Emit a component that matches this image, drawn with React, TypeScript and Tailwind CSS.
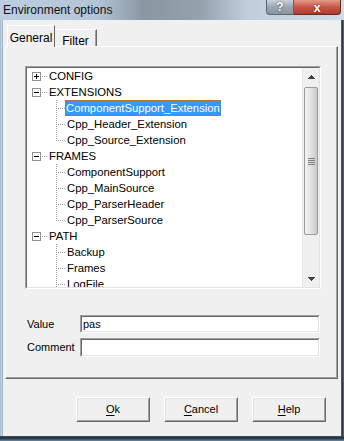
import React from "react";

type Node = {
  label: string;
  level: 0 | 1;
  expanded?: boolean;
  last?: boolean;
  selected?: boolean;
};

const nodes: Node[] = [
  { label: "CONFIG", level: 0, expanded: false },
  { label: "EXTENSIONS", level: 0, expanded: true },
  { label: "ComponentSupport_Extension", level: 1, selected: true },
  { label: "Cpp_Header_Extension", level: 1 },
  { label: "Cpp_Source_Extension", level: 1, last: true },
  { label: "FRAMES", level: 0, expanded: true },
  { label: "ComponentSupport", level: 1 },
  { label: "Cpp_MainSource", level: 1 },
  { label: "Cpp_ParserHeader", level: 1 },
  { label: "Cpp_ParserSource", level: 1, last: true },
  { label: "PATH", level: 0, expanded: true },
  { label: "Backup", level: 1 },
  { label: "Frames", level: 1 },
  { label: "LogFile", level: 1 },
];

const DOT = "#a0a0a0";

const TreeRow = ({ node }: { node: Node }) => {
  if (node.level === 0) {
    return (
      <div className="flex h-[16px] items-center shrink-0">
        <svg width="21" height="16" className="shrink-0" shapeRendering="crispEdges">
          <rect x="5.5" y="4.5" width="8" height="8" fill="#fff" stroke="#919191" />
          <line x1="7" y1="8.5" x2="12" y2="8.5" stroke="#000" />
          {!node.expanded && <line x1="9.5" y1="6" x2="9.5" y2="11" stroke="#000" />}
          <line x1="15" y1="8.5" x2="20" y2="8.5" stroke={DOT} strokeDasharray="1 1" />
        </svg>
        <span className="px-[1px] leading-[14px]">{node.label}</span>
      </div>
    );
  }
  return (
    <div className="flex h-[16px] items-center shrink-0">
      <svg width="38" height="16" className="shrink-0" shapeRendering="crispEdges">
        <line
          x1="29.5"
          y1="0"
          x2="29.5"
          y2={node.last ? 9 : 16}
          stroke={DOT}
          strokeDasharray="1 1"
        />
        <line x1="31" y1="8.5" x2="38" y2="8.5" stroke={DOT} strokeDasharray="1 1" />
      </svg>
      <span
        className={
          node.selected
            ? "bg-[#3399ff] text-white px-[1px] leading-[14px] outline outline-1 outline-dotted outline-[#b0702a] -outline-offset-1 h-[16px] flex items-center"
            : "px-[1px] ml-[1px] leading-[14px]"
        }
      >
        {node.label}
      </span>
    </div>
  );
};

const Arrow = ({ up }: { up?: boolean }) => (
  <div className="h-[17px] w-full flex items-center justify-center">
    <svg width="7" height="4" shapeRendering="crispEdges">
      {up ? (
        <polygon points="3.5,0 7,4 0,4" fill="#404040" />
      ) : (
        <polygon points="0,0 7,0 3.5,4" fill="#404040" />
      )}
    </svg>
  </div>
);

const Sunken = ({ className, children }: { className?: string; children?: React.ReactNode }) => (
  <div className={`border border-t-[#a0a0a0] border-l-[#a0a0a0] border-r-white border-b-white ${className ?? ""}`}>
    <div className="border border-t-[#696969] border-l-[#696969] border-r-[#e3e3e3] border-b-[#e3e3e3] h-full bg-white">
      {children}
    </div>
  </div>
);

const Button = ({ letter, rest }: { letter: string; rest: string }) => (
  <div className="w-[74px] h-[25px] border border-t-white border-l-white border-r-[#696969] border-b-[#696969] shrink-0">
    <div className="h-full border border-t-[#e3e3e3] border-l-[#e3e3e3] border-r-[#a0a0a0] border-b-[#a0a0a0] flex items-center justify-center bg-[#f0f0f0]">
      <span>
        <span className="underline underline-offset-[2px]">{letter}</span>
        {rest}
      </span>
    </div>
  </div>
);

export default function App() {
  return (
    <div
      className="w-[344px] h-[441px] flex flex-col text-[11px] text-black overflow-hidden"
      style={{ fontFamily: '"Liberation Sans", Arial, sans-serif' }}
    >
      {/* title bar */}
      <div className="h-[20px] shrink-0 flex justify-between bg-[linear-gradient(90deg,#bccfe0_0%,#b3c5d6_28%,#8a96a2_42%,#95a1ad_58%,#c0cedb_72%,#d0dbe5_100%)]">
        <div className="pl-[3px] pt-[2px] text-[12px] leading-[16px] text-[#111]">Environment options</div>
        <div className="flex h-[15px] mr-[3px]">
          <div className="w-[28px] h-full rounded-bl-[4px] border border-[#5a6470] border-t-0 bg-[linear-gradient(180deg,#c9d3dc,#9aa6b2_50%,#8995a1)] flex items-center justify-center text-white font-bold text-[12px] leading-none [text-shadow:0_0_2px_#333]">
            ?
          </div>
          <div className="w-[47px] h-full rounded-br-[4px] border border-[#5a2a22] border-t-0 border-l-0 bg-[linear-gradient(180deg,#e29a8a,#c8574a_50%,#b03b2b)] flex items-center justify-center text-white font-bold text-[13px] leading-none [text-shadow:0_0_2px_#4a1a10]">
            x
          </div>
        </div>
      </div>

      <div className="flex flex-1 min-h-0">
        {/* left frame */}
        <div className="w-[3px] shrink-0 bg-[linear-gradient(90deg,#9fb8cf,#c5d6e6_60%,#8aa0b6)]" />

        {/* client */}
        <div className="flex-1 bg-[#f0f0f0] flex flex-col pt-[5px]">
          {/* tabs */}
          <div className="h-[21px] flex items-end pl-[4px] relative z-10">
            <div className="w-[48px] h-[22px] mb-[-1px] bg-[#f0f0f0] border-l border-t border-white border-r border-r-[#696969] flex items-start justify-center pt-[3px] text-[12px]">
              General
            </div>
            <div className="w-[42px] h-[17px] border-t border-white border-r border-r-[#696969] shadow-[inset_-1px_0_0_#a0a0a0] flex items-start justify-center pt-[2px] text-[12px]">
              Filter
            </div>
          </div>

          {/* panel */}
          <div className="ml-[2px] mr-[3px] h-[333px] shrink-0 border border-t-white border-l-white border-r-[#696969] border-b-[#696969] shadow-[inset_-1px_-1px_0_#a0a0a0] flex flex-col pl-[19px] pr-[16px] pt-[19px]">
            <Sunken className="h-[223px] w-[296px] shrink-0">
              <div className="flex h-full text-[11.3px]">
                <div className="flex-1 flex flex-col overflow-hidden">
                  {nodes.map((n) => (
                    <TreeRow key={n.label} node={n} />
                  ))}
                </div>
                <div className="w-[17px] shrink-0 bg-[#f0f0f0] border-l border-[#e6e6e6] flex flex-col">
                  <Arrow up />
                  <div className="mt-[2px] mx-[1px] h-[148px] rounded-[2px] border border-[#9a9a9a] bg-[linear-gradient(90deg,#f4f4f4,#e2e2e2_50%,#c9c9c9)] flex flex-col items-center justify-center gap-[1px]">
                    <div className="w-[7px] h-[1px] bg-[#7a7a7a]" />
                    <div className="w-[7px] h-[1px] bg-[#7a7a7a]" />
                    <div className="w-[7px] h-[1px] bg-[#7a7a7a]" />
                    <div className="w-[7px] h-[1px] bg-[#7a7a7a]" />
                  </div>
                  <div className="flex-1" />
                  <Arrow />
                </div>
              </div>
            </Sunken>

            <div className="mt-[26px] flex items-start">
              <div className="w-[55px] pl-[2px] pt-[1px]">Value</div>
              <Sunken className="w-[240px] h-[18px]">
                <div className="pl-[1px] leading-[14px]">pas</div>
              </Sunken>
            </div>
            <div className="mt-[5px] flex items-start">
              <div className="w-[55px] pl-[2px] pt-[1px]">Comment</div>
              <Sunken className="w-[240px] h-[19px]" />
            </div>
          </div>

          {/* buttons */}
          <div className="flex-1 flex justify-end items-start pt-[18px] pr-[15px] gap-[14px]">
            <Button letter="O" rest="k" />
            <Button letter="C" rest="ancel" />
            <Button letter="H" rest="elp" />
          </div>
        </div>

        {/* right frame */}
        <div className="w-[4px] shrink-0 bg-[linear-gradient(90deg,#5b6670,#2f3740_40%,#8ea3b8)]" />
      </div>

      {/* bottom frame */}
      <div className="h-[5px] shrink-0 bg-[linear-gradient(180deg,#4b5560,#1e2a36_40%,#6f8ca8)]" />
    </div>
  );
}
